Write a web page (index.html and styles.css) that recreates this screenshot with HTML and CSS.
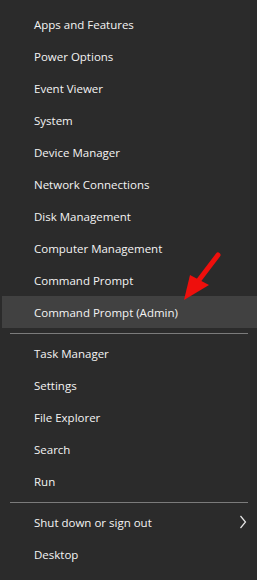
FILE: index.html
```
<!DOCTYPE html>
<html>
<head>
<meta charset="utf-8">
<link rel="stylesheet" href="styles.css">
</head>
<body>
<div class="menu">
  <div class="item">Apps and Features</div>
  <div class="item">Power Options</div>
  <div class="item">Event Viewer</div>
  <div class="item">System</div>
  <div class="item">Device Manager</div>
  <div class="item">Network Connections</div>
  <div class="item">Disk Management</div>
  <div class="item">Computer Management</div>
  <div class="item">Command Prompt</div>
  <div class="item active">Command Prompt (Admin)</div>
  <div class="sep"></div>
  <div class="item">Task Manager</div>
  <div class="item">Settings</div>
  <div class="item">File Explorer</div>
  <div class="item">Search</div>
  <div class="item">Run</div>
  <div class="sep"></div>
  <div class="item has-sub">Shut down or sign out
    <svg class="chev" width="8" height="14" viewBox="0 0 8 14"><path d="M1.5 1 L6.5 7 L1.5 13" fill="none" stroke="#e8e8e8" stroke-width="1.2"/></svg>
  </div>
  <div class="item">Desktop</div>
  <svg class="arrow" width="50" height="56" viewBox="0 0 50 56">
    <path d="M43 7 L24 32" stroke="#ee0f0c" stroke-width="5" stroke-linecap="round" fill="none"/>
    <path d="M15 27 L34 37 L9 52 Z" fill="#ee0f0c"/>
  </svg>
</div>
</body>
</html>
```
FILE: styles.css
```
html, body {
  margin: 0;
  padding: 0;
  background: #2b2b2b;
}
.menu {
  position: relative;
  width: 257px;
  height: 580px;
  padding: 8px 0 0 2px;
  box-sizing: border-box;
  display: flex;
  flex-direction: column;
  font-family: "Open Sans", "Noto Sans", sans-serif;
  font-size: 11.5px;
  color: #f4f4f4;
}
.item {
  height: 32px;
  display: flex;
  align-items: center;
  padding-left: 32px;
  padding-right: 10px;
  white-space: nowrap;
}
.item.active {
  background: #414141;
}
.has-sub {
  justify-content: space-between;
}
.sep {
  height: 9px;
  display: flex;
  align-items: center;
  padding: 0 9px 0 8px;
}
.sep::before {
  content: "";
  flex: 1;
  height: 1px;
  margin-top: 1px;
  background: #7b7b7b;
}
.arrow {
  position: absolute;
  left: 175px;
  top: 248px;
}
```
